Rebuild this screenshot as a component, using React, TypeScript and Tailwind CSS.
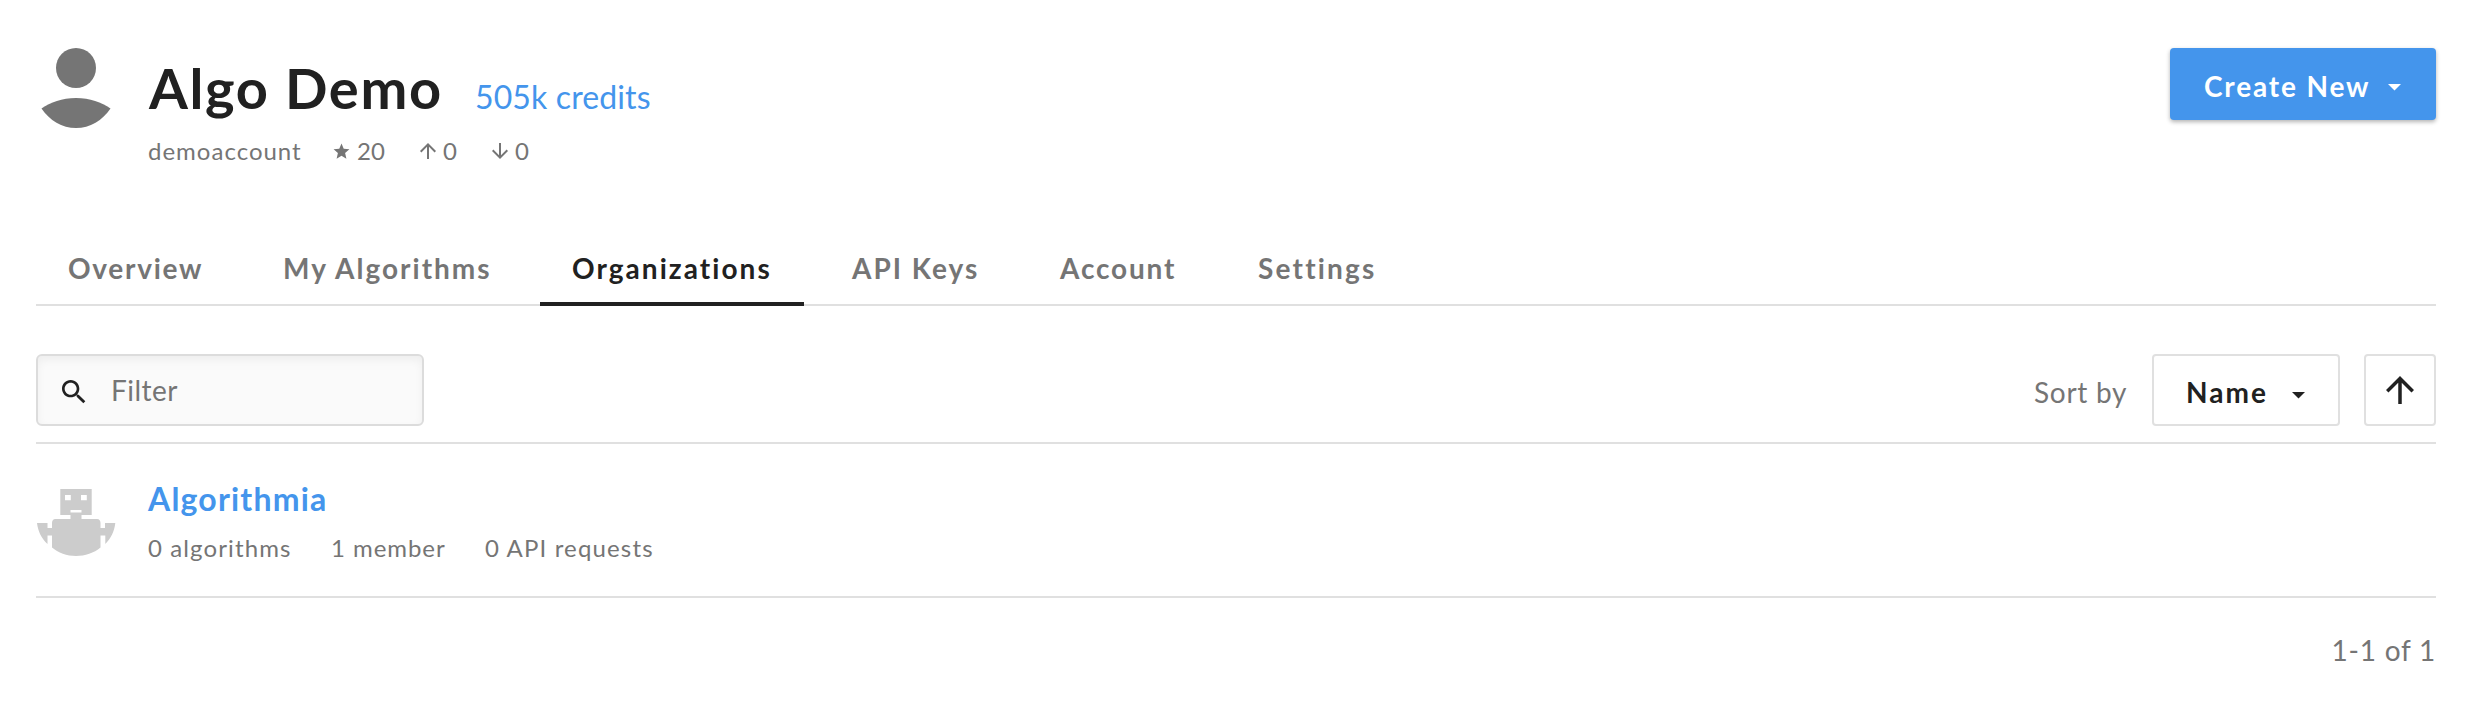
import type { ReactNode } from "react";

const tabs = [
  { label: "Overview", className: "w-[200px] tracking-[1.72px] pl-8" },
  { label: "My Algorithms", className: "w-[272px] tracking-[2px] pl-[31px]" },
  { label: "Organizations", className: "w-[264px] tracking-[2.05px] pl-8", active: true },
  { label: "API Keys", className: "w-[192px] tracking-[1.99px] pl-8" },
  { label: "Account", className: "w-[182px] tracking-[1.83px] pl-8" },
  { label: "Settings", className: "w-[184px] tracking-[2.2px] pl-8" },
];

function UserAvatar() {
  return (
    <svg className="size-20 shrink-0" viewBox="0 0 80 80" fill="#757575">
      <circle cx="40" cy="20" r="20" />
      <path d="M40 50 C54 50 65.500 54.500 74.500 60.500 C66.500 72.500 54 80 40 80 C26 80 13.500 72.500 5.500 60.500 C14.500 54.500 26 50 40 50Z" />
    </svg>
  );
}

function RobotAvatar() {
  return (
    <svg className="size-20 shrink-0" viewBox="0 0 80 80" fill="#cccccc">
      <path
        fillRule="evenodd"
        d="M24.300 13H55.700V39H45.500V43H61C63.500 43 64.500 45 64.500 47V52H69V47H79.300C78.400 55 75 62.500 69.300 68V59.500H64.500V71.500C58 77 49 80 40 80C31 80 22 76.500 16 71.500V59.500H11.500V68C5 62 2 55 1 47H11.500V52H16V47C16 45 17 43 19.500 43H34.500V39H24.300ZM29 19V24.200H34.800V19ZM45 19V24.200H50.800V19ZM34.500 34V36.500H45.500V34Z"
      />
    </svg>
  );
}

function Arrow({ className, down = false }: { className: string; down?: boolean }) {
  return (
    <svg className={className} viewBox="0 0 24 24" fill="currentColor">
      <path
        d={
          down
            ? "M20 12l-1.410-1.410L13 16.170V4h-2v12.170l-5.580-5.590L4 12l8 8 8-8z"
            : "M4 12l1.410 1.410L11 7.830V20h2V7.830l5.580 5.590L20 12l-8-8-8 8z"
        }
      />
    </svg>
  );
}

function Caret() {
  return (
    <svg className="h-[7px] w-[13px]" viewBox="0 0 13 7" fill="currentColor">
      <path d="M0 0H13L6.500 6.600Z" />
    </svg>
  );
}

function Stat({ icon, children, className }: { icon: ReactNode; children: ReactNode; className: string }) {
  return (
    <span className={`flex items-center ${className}`}>
      {icon}
      {children}
    </span>
  );
}

export default function App() {
  return (
    <div className="h-[716px] w-[2478px] bg-white pl-9 pr-[42px] pt-12 font-['Lato',sans-serif] text-[28px] text-[#757575]">
      <header className="flex h-[182px] items-start">
        <UserAvatar />
        <div className="ml-8">
          <div className="flex h-[77px] items-baseline pt-px leading-[77px]">
            <h1 className="w-[327px] whitespace-nowrap pl-px text-[56px] font-bold tracking-[1.670px] text-[#212121]">Algo Demo</h1>
            <a className="whitespace-nowrap text-[32px] tracking-[0.120px] text-[#4495ec]">505k credits</a>
          </div>
          <div className="mt-[10px] flex h-8 items-center text-2xl leading-8">
            <span className="w-[184px] tracking-[1px]">demoaccount</span>
            <Stat
              className="w-[84px]"
              icon={
                <svg className="mr-1.5 size-[19px]" viewBox="0 0 24 24" fill="currentColor">
                  <path d="M12 17.270L18.180 21l-1.640-7.030L22 9.240l-7.190-.61L12 2 9.190 8.630 2 9.240l5.460 4.730L5.820 21z" />
                </svg>
              }
            >
              20
            </Stat>
            <Stat className="w-[72px]" icon={<Arrow className="mr-[3px] size-6" />}>0</Stat>
            <Stat className="w-[72px]" icon={<Arrow down className="mr-[3px] size-6" />}>0</Stat>
          </div>
        </div>
        <button className="ml-auto flex h-[72px] w-[266px] items-center rounded-[4px] bg-[#4495ec] pl-[34px] font-bold text-white shadow-[0_2px_4px_rgba(0,0,0,0.3)]">
          <span className="w-[184px] whitespace-nowrap pt-[3px] text-left leading-8 tracking-[1.840px]">Create New</span>
          <span className="pt-1.5"><Caret /></span>
        </button>
      </header>

      <nav className="flex h-[76px] gap-4 border-b-2 border-[#e0e0e0] font-bold">
        {tabs.map((tab) => (
          <a
            key={tab.label}
            className={`h-[76px] whitespace-nowrap pt-5 leading-9 ${tab.className} ${
              tab.active ? "border-b-4 border-[#212121] text-[#212121]" : ""
            }`}
          >
            {tab.label}
          </a>
        ))}
      </nav>

      <section className="flex h-[138px] items-start border-b-2 border-[#e0e0e0] pt-12">
        <div className="flex h-[72px] w-[388px] items-center rounded-[6px] border-2 border-[#dcdcdc] bg-[#fafafa] pl-5 shadow-[inset_0_4px_8px_rgba(0,0,0,0.05)]">
          <svg className="mt-1 size-8 text-[#212121]" viewBox="0 0 24 24" fill="currentColor">
            <path d="M15.500 14h-.79l-.28-.27C15.410 12.590 16 11.110 16 9.500 16 5.910 13.090 3 9.500 3S3 5.910 3 9.500 5.910 16 9.500 16c1.610 0 3.090-.59 4.230-1.570l.27.28v.79l5 4.990L20.490 19l-4.990-5zm-6 0C7.010 14 5 11.990 5 9.500S7.010 5 9.500 5 14 7.010 14 9.500 11.990 14 9.500 14z" />
          </svg>
          <span className="ml-[21px] leading-9 tracking-[0.500px]">Filter</span>
        </div>
        <div className="ml-auto flex h-[72px] items-center">
          <span className="w-[118px] pt-[3px] leading-9 tracking-[0.700px]">Sort by</span>
          <button className="flex h-[72px] w-[188px] items-center rounded-[4px] border-2 border-[#e0e0e0] pl-8 font-bold text-[#212121]">
            <span className="w-[106px] pt-[3px] text-left leading-9 tracking-[2.040px]">Name</span>
            <span className="pt-2.5"><Caret /></span>
          </button>
          <button className="ml-6 flex size-[72px] items-center justify-center rounded-[4px] border-2 border-[#e0e0e0] text-[#212121]">
            <Arrow className="size-[42px]" />
          </button>
        </div>
      </section>

      <section className="flex h-[154px] border-b-2 border-[#e0e0e0]">
        <div className="pt-8"><RobotAvatar /></div>
        <div className="ml-8 pt-[35px]">
          <div className="text-[32px] font-bold leading-10 tracking-[1.190px] text-[#4495ec]">Algorithmia</div>
          <div className="mt-3 flex pt-px text-2xl leading-8">
            <span className="w-[183px] tracking-[1.110px]">0 algorithms</span>
            <span className="w-[154px] tracking-[0.950px]">1 member</span>
            <span className="whitespace-nowrap tracking-[1.150px]">0 API requests</span>
          </div>
        </div>
      </section>

      <div className="pt-[34px] text-right leading-9 tracking-[0.770px]">1-1 of 1</div>
    </div>
  );
}
